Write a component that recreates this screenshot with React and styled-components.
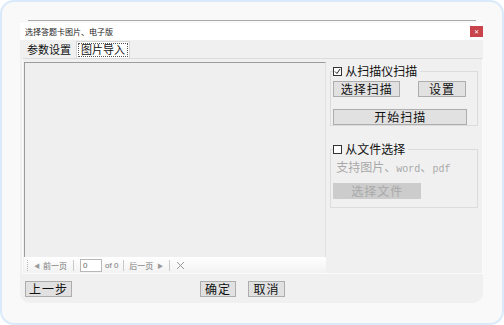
import React from "react";
import styled, { createGlobalStyle } from "styled-components";

const Global = createGlobalStyle`
  html, body { margin: 0; padding: 0; background: #ffffff; }
  * { box-sizing: border-box; }
  body { font-family: "Noto Sans CJK SC", "DejaVu Sans", sans-serif; }
`;

const Card = styled.div`
  width: 504px;
  height: 325px;
  border: 2px solid #d9eafb;
  border-radius: 14px;
  background: #f9f9f9;
  display: flex;
  flex-direction: column;
`;

const TopRule = styled.div`
  height: 1px;
  background: #a9a9a9;
  margin: 18px 26px 0 26px;
`;

const Window = styled.div`
  margin: 2px 19px 0 18px;
  display: flex;
  flex-direction: column;
`;

const TitleBar = styled.div`
  height: 17px;
  background: #ffffff;
  display: flex;
  align-items: center;
  justify-content: space-between;
  padding: 0 0 0 5px;
`;

const TitleText = styled.span`
  font-size: 8px;
  color: #222;
  line-height: 1;
`;

const CloseBtn = styled.div`
  width: 13px;
  height: 11px;
  background: #c8434b;
  color: #fff;
  font-size: 6px;
  font-family: "DejaVu Sans", sans-serif;
  display: flex;
  align-items: center;
  justify-content: center;
  line-height: 1;
`;

const Body = styled.div`
  height: 263px;
  background: #f0f0f0;
  border-radius: 0 0 10px 10px;
  display: flex;
  flex-direction: column;
`;

const Tabs = styled.div`
  height: 18px;
  display: flex;
  align-items: flex-end;
  padding-left: 3px;
`;

const Tab = styled.div`
  height: 17px;
  padding: ${p => (p.$active ? "0 4px" : "0 3px 0 3px")};
  margin-left: ${p => (p.$active ? "1px" : "0")};
  font-size: 11px;
  line-height: 15px;
  color: #111;
  background: ${p => (p.$active ? "#ffffff" : "transparent")};
  border: ${p => (p.$active ? "1px solid #d6d6d6" : "1px solid transparent")};
  border-bottom: none;
  position: relative;
  &::after {
    content: "";
    display: ${p => (p.$active ? "block" : "none")};
    position: absolute;
    left: 1px;
    right: 1px;
    top: 1px;
    bottom: 1px;
    border: 1px dotted #555;
  }
`;

const Panel = styled.div`
  margin: 0 0 0 2px;
  height: 216px;
  border: 1px solid #fbfbfb;
  border-top-color: #dcdcdc;
  display: flex;
  padding: 3px 4px 0 1px;
  gap: 4px;
`;

const LeftCol = styled.div`
  width: 303px;
  display: flex;
  flex-direction: column;
`;

const Viewer = styled.div`
  flex: 1;
  background: #efefef;
  border-top: 1px solid #9c9c9c;
  border-left: 1px solid #9c9c9c;
  border-right: 1px solid #e2e2e2;
`;

const Toolbar = styled.div`
  height: 16px;
  background: linear-gradient(#ffffff, #f2f2f2);
  display: flex;
  align-items: center;
  padding-left: 3px;
  font-size: 8px;
  color: #777;
  font-family: "Noto Sans CJK SC", "Liberation Sans", sans-serif;
  white-space: nowrap;
`;

const Grip = styled.div`
  width: 1px;
  height: 11px;
  border-left: 1px dotted #b5b5b5;
  margin-right: 5px;
`;

const Sep = styled.div`
  width: 1px;
  height: 11px;
  background: #c9c9c9;
  margin: 0 ${p => p.$m || 4}px;
`;

const Arrow = styled.span`
  font-size: 6px;
  color: #9a9a9a;
  margin: ${p => p.$m || "0"};
`;

const PageBox = styled.div`
  width: 22px;
  height: 13px;
  border: 1px solid #b8b8b8;
  background: #fff;
  font-family: "Liberation Sans", sans-serif;
  font-size: 8px;
  color: #666;
  line-height: 11px;
  padding-left: 2px;
  margin-right: 3px;
`;

const Latin = styled.span`
  font-family: "Liberation Sans", sans-serif;
`;

const RightCol = styled.div`
  width: 148px;
  display: flex;
  flex-direction: column;
  gap: 16px;
  padding-top: 2px;
`;

const Group = styled.div`
  position: relative;
  border: 1px solid #dcdcdc;
  height: ${p => p.$h}px;
  margin-top: 7px;
  padding: 9px 2px 0 2px;
`;

const Legend = styled.div`
  position: absolute;
  top: -9px;
  left: 2px;
  background: #f0f0f0;
  display: flex;
  align-items: center;
  gap: 3px;
  padding-right: 3px;
  font-size: 12px;
  line-height: 16px;
  color: #111;
`;

const Check = styled.div`
  width: 9px;
  height: 9px;
  border: 1px solid #333;
  background: #fff;
  display: flex;
  align-items: center;
  justify-content: center;
`;

const BtnRow = styled.div`
  display: flex;
  justify-content: space-between;
  padding-right: 9px;
  margin-bottom: 12px;
`;

const Btn = styled.div`
  width: ${p => p.$w}px;
  height: 16px;
  background: ${p => (p.$disabled ? "#cccccc" : "#e1e1e1")};
  border: 1px solid ${p => (p.$disabled ? "#cccccc" : "#adadad")};
  color: ${p => (p.$disabled ? "#a9a9a9" : "#111")};
  font-size: 12px;
  line-height: 14px;
  text-align: center;
  letter-spacing: 1px;
`;

const Hint = styled.div`
  font-size: 12px;
  line-height: 16px;
  color: #a9a9a9;
  margin: 0 0 5px 3px;
  display: flex;
  align-items: baseline;
`;

const Mono = styled.span`
  font-family: "Liberation Mono", monospace;
  font-size: 10px;
`;

const Footer = styled.div`
  display: flex;
  align-items: center;
  padding: 7px 0 0 5px;
`;

const Spacer = styled.div`
  width: ${p => p.$w}px;
`;

const App = () => (
  <>
    <Global />
    <Card>
      <TopRule />
      <Window>
        <TitleBar>
          <TitleText>选择答题卡图片、电子版</TitleText>
          <CloseBtn>✕</CloseBtn>
        </TitleBar>
        <Body>
          <Tabs>
            <Tab>参数设置</Tab>
            <Tab $active>图片导入</Tab>
          </Tabs>
          <Panel>
            <LeftCol>
              <Viewer />
              <Toolbar>
                <Grip />
                <Arrow $m="0 3px 0 1px">◀</Arrow>
                前一页
                <Sep $m={6} />
                <PageBox>0</PageBox>
                <Latin>of 0</Latin>
                <Sep $m={5} />
                后一页
                <Arrow $m="0 0 0 4px">▶</Arrow>
                <Sep $m={6} />
                <svg width="9" height="9" viewBox="0 0 9 9">
                  <path d="M1 1L8 8M8 1L1 8" stroke="#9a9a9a" strokeWidth="1" />
                </svg>
              </Toolbar>
            </LeftCol>
            <RightCol>
              <Group $h={55}>
                <Legend>
                  <Check>
                    <svg width="7" height="7" viewBox="0 0 7 7">
                      <path d="M1 3.5L3 5.5L6 1" stroke="#222" strokeWidth="1" fill="none" />
                    </svg>
                  </Check>
                  从扫描仪扫描
                </Legend>
                <BtnRow>
                  <Btn $w={67}>选择扫描</Btn>
                  <Btn $w={48}>设置</Btn>
                </BtnRow>
                <Btn $w={134}>开始扫描</Btn>
              </Group>
              <Group $h={59}>
                <Legend>
                  <Check />
                  从文件选择
                </Legend>
                <Hint>
                  支持图片、<Mono>word</Mono>、<Mono>pdf</Mono>
                </Hint>
                <Btn $w={88} $disabled>选择文件</Btn>
              </Group>
            </RightCol>
          </Panel>
          <Footer>
            <Btn $w={47}>上一步</Btn>
            <Spacer $w={128} />
            <Btn $w={36}>确定</Btn>
            <Spacer $w={12} />
            <Btn $w={37}>取消</Btn>
          </Footer>
        </Body>
      </Window>
    </Card>
  </>
);

export default App;
